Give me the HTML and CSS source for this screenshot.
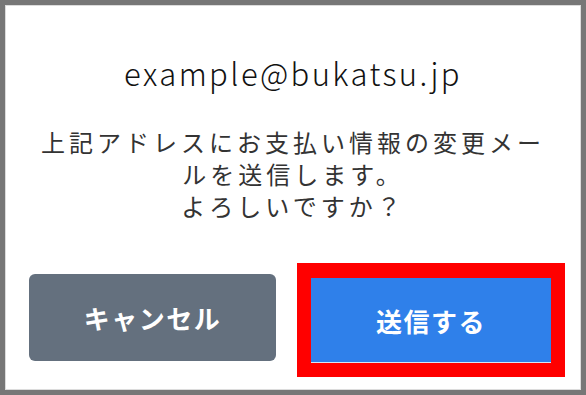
FILE: index.html
```html
<!DOCTYPE html>
<html lang="ja">
<head>
<meta charset="utf-8">
<title>確認</title>
<link rel="stylesheet" href="styles.css">
</head>
<body>
<div class="dialog">
  <p class="email">example@bukatsu.jp</p>
  <p class="message">上記アドレスにお支払い情報の変更メールを送信します。<br>よろしいですか？</p>
  <div class="actions">
    <button class="btn btn-cancel" type="button">キャンセル</button>
    <div class="highlight">
      <button class="btn btn-send" type="button">送信する</button>
    </div>
  </div>
</div>
</body>
</html>
```
FILE: styles.css
```css
html, body {
  margin: 0;
  padding: 0;
  background: #ffffff;
}
.dialog {
  box-sizing: border-box;
  width: 586px;
  height: 395px;
  border: 5px solid #777777;
  box-shadow: inset 0 0 0 1px #dcdcdc;
  background: #ffffff;
  padding-top: 48px;
  font-family: "Noto Sans CJK JP", "Noto Sans", sans-serif;
  color: #222222;
}
.email {
  margin: 0;
  text-align: center;
  font-size: 31px;
  line-height: 40px;
  letter-spacing: 2.4px;
  font-weight: 300;
  color: #111111;
}
.message {
  margin: 33px auto 0;
  width: 520px;
  text-align: center;
  font-size: 24px;
  line-height: 32px;
  letter-spacing: 4px;
  color: #333333;
}
.actions {
  display: flex;
  align-items: flex-start;
  gap: 21px;
  padding: 0 16px 0 24px;
  margin-top: 41px;
}
.btn {
  border: none;
  font-family: "Noto Sans CJK JP", "Noto Sans", sans-serif;
  font-size: 26px;
  font-weight: 700;
  color: #ffffff;
  letter-spacing: 1.5px;
  cursor: pointer;
}
.btn-cancel {
  margin-top: 11px;
  width: 247px;
  height: 87px;
  border-radius: 6px;
  background: #64707e;
}
.highlight {
  box-sizing: border-box;
  width: 268px;
  height: 114px;
  border: 14px solid #ff0000;
  border-top-width: 15px;
  background: #ff0000;
}
.btn-send {
  display: block;
  width: 240px;
  height: 85px;
  background: #2f80ea;
  box-shadow: inset 0 -1px 0 #d8e6f5;
}
```
